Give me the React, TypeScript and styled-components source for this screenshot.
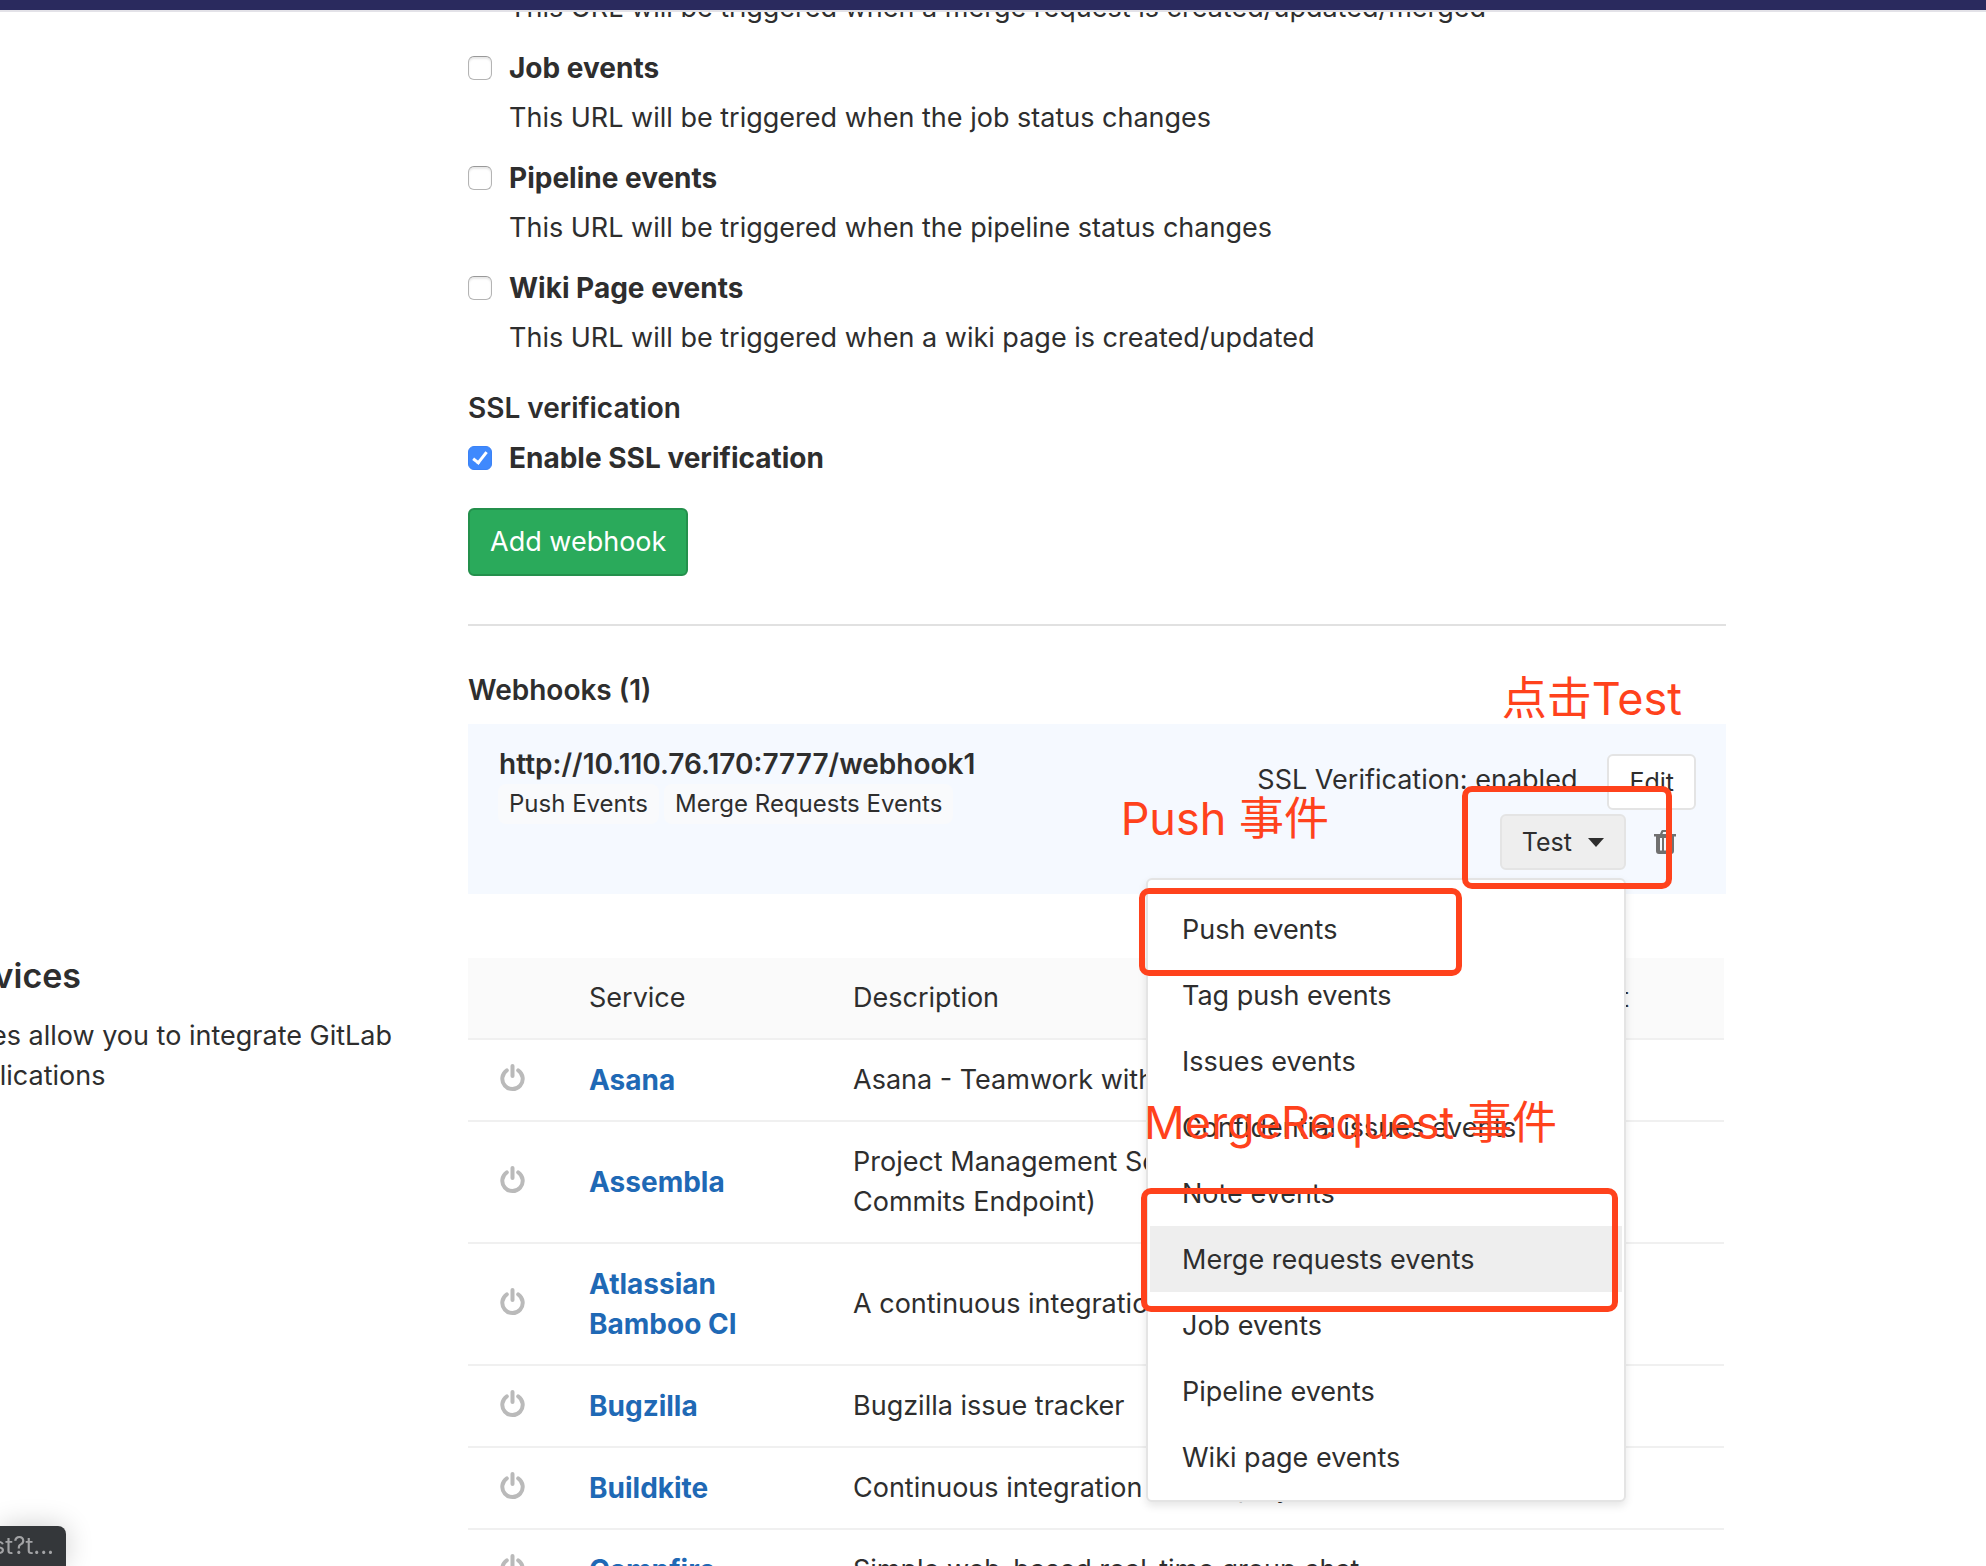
import React from "react";
import styled, { createGlobalStyle, css } from "styled-components";

const ink = "#2e2e2e";
const red = "#ff421c";
const sans = `Inter, "Noto Sans CJK SC", sans-serif`;

const GlobalStyle = createGlobalStyle`
  *, *::before, *::after { box-sizing: border-box; }
  html, body { margin: 0; background: #fff; }
  body { color: ${ink}; font: 400 27px/40px ${sans}; overflow: hidden; }
  button, input { font: inherit; color: inherit; margin: 0; }
  h3, h4, p, ul { margin: 0; padding: 0; font: inherit; }
`;

const Viewport = styled.div`
  height: 100vh;
  overflow: hidden;
`;

const TopBar = styled.header`
  position: relative;
  z-index: 5;
  height: 12px;
  background: #2a2a5e;
  border-bottom: 2px solid #e3e2e8;
`;

const Main = styled.main`
  margin: -24px 0 0 -184px;
  padding-right: 260px;
`;

const Section = styled.section`
  display: grid;
  grid-template-columns: 652px minmax(0, 1fr);
`;

const Aside = styled.aside`
  padding-right: 60px;
`;

const AsideTitle = styled.h4`
  margin-bottom: 22px;
  font-size: 34px;
  line-height: 36px;
  font-weight: 600;
`;

const Column = styled.div`
  min-width: 0;
`;

const EventList = styled.ul`
  display: grid;
  gap: 20px;
  list-style: none;
`;

const EventItem = styled.li`
  display: grid;
  gap: 10px;
`;

const CheckLabel = styled.label`
  display: flex;
  gap: 17px;
  font-size: 28px;
  font-weight: 700;
`;

const CheckBox = styled.input`
  appearance: none;
  flex: none;
  display: grid;
  place-items: center;
  width: 24px;
  height: 24px;
  margin-top: 8px;
  border: 1px solid #b4b4b4;
  border-top-color: #999;
  border-radius: 6px;
  background: #fff;
  box-shadow: inset 0 2px 2px #e8e8e8;

  &:checked {
    border-color: #3b82f6;
    background: #3f89fd;
    box-shadow: none;
  }

  &:checked::after {
    content: "";
    width: 8px;
    height: 15px;
    margin-top: -3px;
    border: solid #fff;
    border-width: 0 3px 3px 0;
    transform: rotate(38deg);
  }
`;

const Hint = styled.p`
  padding-left: 41px;
`;

const SslField = styled.div`
  display: grid;
  gap: 10px;
  margin: 30px 0;
`;

const Title = styled.h3`
  font-size: 28px;
  font-weight: 600;
`;

const AddButton = styled.button`
  display: block;
  height: 68px;
  padding: 0 20px;
  border: 2px solid #24904c;
  border-radius: 6px;
  background: #2aaa5b;
  color: #fff;
`;

const Divider = styled.hr`
  height: 2px;
  margin: 48px 0 44px;
  border: 0;
  background: #e1e1e1;
`;

const HookPanel = styled.div`
  position: relative;
  display: flex;
  justify-content: space-between;
  margin: 14px 0 64px;
  padding: 20px 30px 24px;
  background: #f5f9ff;
`;

const HookUrl = styled.div`
  padding-left: 1px;
  font-size: 28px;
  font-weight: 600;
`;

const Badges = styled.div`
  display: flex;
  gap: 5px;
`;

const Badge = styled.span`
  padding: 0 11px;
  border-radius: 8px;
  background: #f9fafc;
  font-size: 24px;
`;

const HookActions = styled.div`
  display: grid;
  justify-items: end;
  gap: 4px;
  padding-top: 10px;
`;

const ActionLine = styled.div<{ $gap: number }>`
  display: flex;
  align-items: center;
  gap: ${(p) => p.$gap}px;
  height: 56px;
`;

const SslState = styled.span`
  margin-top: -4px;
`;

const SmallButton = styled.button<{ $active?: boolean }>`
  display: flex;
  align-items: center;
  gap: 16px;
  height: 56px;
  padding: 0 20px;
  border: 2px solid #e4e4e4;
  border-radius: 6px;
  background: ${(p) => (p.$active ? "#eeeeee" : "#fff")};
  font-size: 25px;
`;

const Caret = styled.span`
  border: 8px solid transparent;
  border-top: 9px solid ${ink};
  border-bottom: 0;
`;

const IconButton = styled.button`
  display: flex;
  padding: 0 20px 0 8px;
  border: 0;
  background: none;
  color: #707070;
`;

const DropDown = styled.div`
  position: relative;
`;

const Menu = styled.ul`
  position: absolute;
  z-index: 2;
  top: 64px;
  right: 0;
  width: 480px;
  padding: 16px 2px 10px;
  border: 2px solid #e4e4e4;
  border-radius: 6px;
  background: #fff;
  box-shadow: 0 4px 8px rgba(0, 0, 0, 0.1);
  list-style: none;
`;

const MenuButton = styled.button<{ $active?: boolean }>`
  display: block;
  width: 100%;
  height: 66px;
  padding: 2px 32px 0;
  border: 0;
  background: ${(p) => (p.$active ? "#eeeeee" : "none")};
  text-align: left;
`;

const marked = css`
  position: absolute;
  z-index: 3;
  pointer-events: none;
`;

const MarkBox = styled.div<{ $top: number; $right: number; $w: number; $h: number }>`
  ${marked}
  top: ${(p) => p.$top}px;
  right: ${(p) => p.$right}px;
  width: ${(p) => p.$w}px;
  height: ${(p) => p.$h}px;
  border: 6px solid ${red};
  border-radius: 10px;
`;

const MarkText = styled.span<{ $top: number; $right: number }>`
  ${marked}
  top: ${(p) => p.$top}px;
  right: ${(p) => p.$right}px;
  color: ${red};
  font-size: 45px;
  line-height: 60px;
  white-space: nowrap;
`;

const Services = styled.table`
  width: calc(100% - 2px);
  border-collapse: collapse;
  table-layout: fixed;
`;

const cell = css`
  padding: 20px 32px;
  border-bottom: 2px solid #f0f0f0;
  font-weight: 400;
  text-align: left;
  vertical-align: middle;
`;

const Head = styled.th<{ $width?: number }>`
  ${cell}
  width: ${(p) => (p.$width ? `${p.$width}px` : "auto")};
  background: #fafafa;
`;

const Cell = styled.td`
  ${cell}
`;

const ServiceLink = styled.a`
  display: block;
  color: #1f69b5;
  font-size: 28px;
  font-weight: 700;
  text-decoration: none;
`;

const PowerSvg = styled.svg`
  display: block;
  margin-bottom: 4px;
`;

const StatusBubble = styled.div`
  position: fixed;
  z-index: 6;
  left: 0;
  bottom: 0;
  display: flex;
  justify-content: flex-end;
  width: 66px;
  height: 40px;
  padding-right: 12px;
  overflow: hidden;
  border-top-right-radius: 8px;
  background: #34373a;
  color: #a3a4a6;
  font-size: 24px;
  white-space: nowrap;
`;

const StatusShade = styled.div`
  position: fixed;
  left: 0;
  bottom: 0;
  width: 66px;
  height: 40px;
  border-radius: 8px;
  box-shadow: 0 0 28px rgba(0, 0, 0, 0.2);
`;

const PowerIcon = () => (
  <PowerSvg width="26" height="28" viewBox="0 0 26 28" fill="none" stroke="#bababa" strokeWidth="4" strokeLinecap="round" aria-hidden="true">
    <path d="M6.8 6.4a10.2 10.2 0 1 0 11.4 0" />
    <path d="M12.5 2v10" />
  </PowerSvg>
);

const TrashIcon = () => (
  <svg width="22" height="24" viewBox="0 0 22 24" fill="currentColor" aria-hidden="true">
    <path
      fillRule="evenodd"
      d="M0 4h6l1.2-3Q7.600 0 8.600 0h4.800q1 0 1.400 1L16 4h6v2.500h-2V21q0 3-3 3H5q-3 0-3-3V6.500H0ZM8.400 4h5.200l-.8-2H9.200ZM6 8v12.500h2V8ZM10 8v12.500h2V8ZM14 8v12.500h2V8Z"
    />
  </svg>
);

const events = [
  { id: "job", name: "Job events", hint: "This URL will be triggered when the job status changes" },
  { id: "pipeline", name: "Pipeline events", hint: "This URL will be triggered when the pipeline status changes" },
  { id: "wiki", name: "Wiki Page events", hint: "This URL will be triggered when a wiki page is created/updated" },
];

const tests = [
  "Push events",
  "Tag push events",
  "Issues events",
  "Confidential issues events",
  "Note events",
  "Merge requests events",
  "Job events",
  "Pipeline events",
  "Wiki page events",
];

const services = [
  ["Asana", "Asana - Teamwork without email"],
  ["Assembla", "Project Management Software (Source Commits Endpoint)"],
  ["Atlassian Bamboo CI", "A continuous integration and build server"],
  ["Bugzilla", "Bugzilla issue tracker"],
  ["Buildkite", "Continuous integration and deployments"],
  ["Campfire", "Simple web-based real-time group chat"],
];

export default function App() {
  return (
    <Viewport>
      <GlobalStyle />
      <TopBar />
      <Main>
        <Section>
          <Aside />
          <Column>
            <EventList>
              <EventItem>
                <Hint>This URL will be triggered when a merge request is created/updated/merged</Hint>
              </EventItem>
              {events.map((e) => (
                <EventItem key={e.id}>
                  <CheckLabel htmlFor={e.id}>
                    <CheckBox type="checkbox" id={e.id} />
                    {e.name}
                  </CheckLabel>
                  <Hint>{e.hint}</Hint>
                </EventItem>
              ))}
            </EventList>
            <SslField>
              <Title>SSL verification</Title>
              <CheckLabel htmlFor="ssl">
                <CheckBox type="checkbox" id="ssl" defaultChecked />
                Enable SSL verification
              </CheckLabel>
            </SslField>
            <AddButton type="button">Add webhook</AddButton>
            <Divider />
            <Title>Webhooks (1)</Title>
            <HookPanel>
              <div>
                <HookUrl>http://10.110.76.170:7777/webhook1</HookUrl>
                <Badges>
                  <Badge>Push Events</Badge>
                  <Badge>Merge Requests Events</Badge>
                </Badges>
              </div>
              <HookActions>
                <ActionLine $gap={30}>
                  <SslState>SSL Verification: enabled</SslState>
                  <SmallButton type="button">Edit</SmallButton>
                </ActionLine>
                <ActionLine $gap={20}>
                  <DropDown>
                    <SmallButton type="button" $active aria-haspopup="true" aria-expanded="true">
                      Test
                      <Caret />
                    </SmallButton>
                    <Menu>
                      {tests.map((t) => (
                        <li key={t}>
                          <MenuButton type="button" $active={t === "Merge requests events"}>
                            {t}
                          </MenuButton>
                        </li>
                      ))}
                    </Menu>
                  </DropDown>
                  <IconButton type="button" aria-label="Remove">
                    <TrashIcon />
                  </IconButton>
                </ActionLine>
              </HookActions>
              <MarkText $top={-55} $right={44}>点击Test</MarkText>
              <MarkText $top={65} $right={397}>Push 事件</MarkText>
              <MarkText $top={369} $right={169}>MergeRequest 事件</MarkText>
              <MarkBox $top={62} $right={54} $w={210} $h={103} />
              <MarkBox $top={164} $right={264} $w={323} $h={88} />
              <MarkBox $top={464} $right={108} $w={477} $h={124} />
            </HookPanel>
          </Column>
        </Section>
        <Section>
          <Aside>
            <AsideTitle>Project services</AsideTitle>
            <p>Project services allow you to integrate GitLab with other applications</p>
          </Aside>
          <Services>
            <thead>
              <tr>
                <Head $width={89} />
                <Head $width={264}>Service</Head>
                <Head>Description</Head>
                <Head $width={236}>Last edit</Head>
              </tr>
            </thead>
            <tbody>
              {services.map(([name, text]) => (
                <tr key={name}>
                  <Cell>
                    <PowerIcon />
                  </Cell>
                  <Cell>
                    <ServiceLink href="#">{name}</ServiceLink>
                  </Cell>
                  <Cell>{text}</Cell>
                  <Cell />
                </tr>
              ))}
            </tbody>
          </Services>
        </Section>
      </Main>
      <StatusShade />
      <StatusBubble>test?t...</StatusBubble>
    </Viewport>
  );
}
